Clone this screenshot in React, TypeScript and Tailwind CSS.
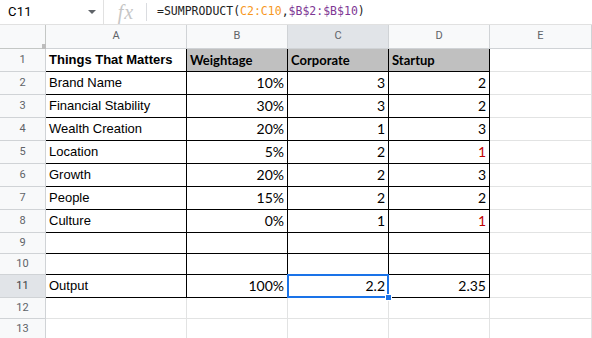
import React from "react";

type Cell = { t?: string; align?: "l" | "r"; bold?: boolean; red?: boolean; font?: "a" | "c"; shade?: boolean };

const rows: { h: number; cells: Cell[] }[] = [
  {
    h: 23,
    cells: [
      { t: "Things That Matters", bold: true, font: "a" },
      { t: "Weightage", bold: true, font: "c", shade: true },
      { t: "Corporate", bold: true, font: "c", shade: true },
      { t: "Startup", bold: true, font: "c", shade: true },
    ],
  },
  { h: 23, cells: [{ t: "Brand Name", font: "a" }, { t: "10%", align: "r", font: "c" }, { t: "3", align: "r", font: "c" }, { t: "2", align: "r", font: "c" }] },
  { h: 23, cells: [{ t: "Financial Stability", font: "a" }, { t: "30%", align: "r", font: "c" }, { t: "3", align: "r", font: "c" }, { t: "2", align: "r", font: "c" }] },
  { h: 23, cells: [{ t: "Wealth Creation", font: "a" }, { t: "20%", align: "r", font: "c" }, { t: "1", align: "r", font: "c" }, { t: "3", align: "r", font: "c" }] },
  { h: 23, cells: [{ t: "Location", font: "a" }, { t: "5%", align: "r", font: "c" }, { t: "2", align: "r", font: "c" }, { t: "1", align: "r", font: "c", red: true }] },
  { h: 23, cells: [{ t: "Growth", font: "a" }, { t: "20%", align: "r", font: "c" }, { t: "2", align: "r", font: "c" }, { t: "3", align: "r", font: "c" }] },
  { h: 23, cells: [{ t: "People", font: "a" }, { t: "15%", align: "r", font: "c" }, { t: "2", align: "r", font: "c" }, { t: "2", align: "r", font: "c" }] },
  { h: 23, cells: [{ t: "Culture", font: "a" }, { t: "0%", align: "r", font: "c" }, { t: "1", align: "r", font: "c" }, { t: "1", align: "r", font: "c", red: true }] },
  { h: 21, cells: [{}, {}, {}, {}] },
  { h: 21, cells: [{}, {}, {}, {}] },
  { h: 23, cells: [{ t: "Output", font: "a" }, { t: "100%", align: "r", font: "c" }, { t: "2.2", align: "r", font: "c" }, { t: "2.35", align: "r", font: "c" }] },
  { h: 21, cells: [] },
  { h: 21, cells: [] },
];

const colW = ["w-[141px]", "w-[101px]", "w-[101px]", "w-[101px]"];

function DataCell({ c, w, inTable, selected }: { c: Cell; w: string; inTable: boolean; selected: boolean }) {
  const border = inTable ? "border-black" : "border-[#e2e3e3]";
  const bg = c.shade ? "bg-[#c0c0c0]" : "bg-white";
  const fontCls =
    c.font === "c"
      ? c.bold
        ? "font-['Lato',sans-serif] text-[13px]"
        : "font-['Lato',sans-serif] text-[14px]"
      : "font-['Liberation_Sans',Arial,sans-serif] text-[13px]";
  return (
    <div className={`relative ${w} shrink-0 h-full border-r border-b ${border} ${bg} flex items-end ${c.align === "r" ? "justify-end" : "justify-start"} px-[3px] pb-[3px] overflow-visible`}>
      {c.t && (
        <span className={`${fontCls} leading-[16px] whitespace-nowrap ${c.bold ? "font-bold" : ""} ${c.red ? "text-[#c00000]" : "text-black"}`}>
          {c.t}
        </span>
      )}
      {selected && (
        <>
          <div className="absolute top-[-1px] left-[-1px] right-[-1px] bottom-[-1px] border-2 border-[#1a73e8] z-10 pointer-events-none" />
          <div className="absolute right-[-4px] bottom-[-4px] w-[7px] h-[7px] bg-[#1a73e8] border border-white z-20" />
        </>
      )}
    </div>
  );
}

export default function App() {
  return (
    <div className="w-[592px] h-[338px] overflow-hidden bg-white font-['Roboto',sans-serif] select-none">
      {/* formula bar */}
      <div className="h-[25px] flex items-center border-b border-[#e1e1e1] bg-white">
        <div className="w-[104px] h-full flex items-center pl-[8px] pr-[7px] border-r border-[#e1e1e1]">
          <span className="text-[13px] text-black font-['Roboto',sans-serif] tracking-[0.2px]">C11</span>
          <svg className="ml-auto" width="8" height="4" viewBox="0 0 8 4">
            <path d="M0 0 L8 0 L4 4 Z" fill="#5f6368" />
          </svg>
        </div>
        <div className="w-[43px] h-[18px] flex items-center justify-center border-r border-[#dadce0]">
          <span className="font-['Liberation_Serif',serif] italic text-[20px] leading-none text-[#c6c6c6] tracking-[1px] ml-[2px]">fx</span>
        </div>
        <div className="pl-[10px] font-['DejaVu_Sans_Mono',monospace] text-[11.5px] whitespace-nowrap text-[#222]">
          <span>=SUMPRODUCT(</span>
          <span className="text-[#f7981d]">C2:C10</span>
          <span>,</span>
          <span className="text-[#7e3794]">$B$2:$B$10</span>
          <span>)</span>
        </div>
      </div>

      {/* column headers */}
      <div className="h-[24px] flex bg-[#f8f9fa]">
        <div className="relative w-[46px] h-full border-r border-b border-[#c4c7c5] shrink-0">
          <div className="absolute right-[-1px] bottom-[-1px] w-[4px] h-[5px] bg-[#bdbdbd]" />
        </div>
        {["A", "B", "C", "D", "E"].map((l, i) => (
          <div
            key={l}
            className={`${i === 0 ? "w-[141px]" : i === 4 ? "w-[102px]" : "w-[101px]"} shrink-0 h-full border-r border-b border-[#d0d3d6] flex items-center justify-center text-[11px] text-[#5f6368] font-['Roboto',sans-serif] ${i === 2 ? "bg-[#e1e4e8]" : ""}`}
          >
            {l}
          </div>
        ))}
      </div>

      {/* rows */}
      {rows.map((r, ri) => {
        const rowNum = ri + 1;
        const inTable = rowNum <= 11;
        return (
          <div key={ri} className="flex" style={{ height: r.h }}>
            <div
              className={`w-[46px] shrink-0 h-full border-r border-b border-[#d0d3d6] flex items-center justify-center text-[11px] font-['Roboto',sans-serif] ${rowNum === 11 ? "bg-[#e1e4e8] text-[#3c4043]" : "bg-[#f8f9fa] text-[#5f6368]"}`}
            >
              {rowNum}
            </div>
            {colW.map((w, ci) => (
              <DataCell
                key={ci}
                c={r.cells[ci] || {}}
                w={w}
                inTable={inTable}
                selected={rowNum === 11 && ci === 2}
              />
            ))}
            <div className="w-[102px] shrink-0 h-full border-r border-b border-[#e2e3e3] bg-white" />
          </div>
        );
      })}
    </div>
  );
}
